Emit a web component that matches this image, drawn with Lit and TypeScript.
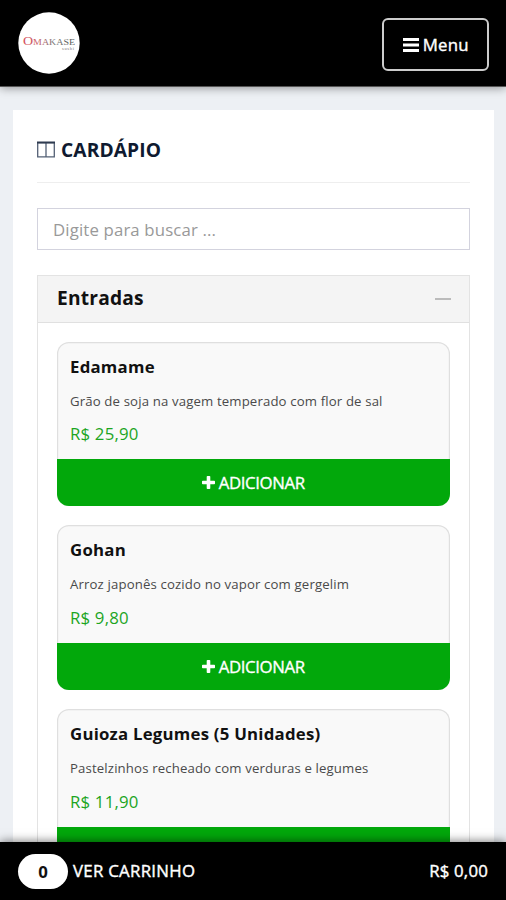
import { LitElement, html, css } from "lit";
import { customElement, property } from "lit/decorators.js";

interface Dish {
  name: string;
  description: string;
  price: string;
}

const DISHES: Dish[] = [
  { name: "Edamame", description: "Grão de soja na vagem temperado com flor de sal", price: "R$ 25,90" },
  { name: "Gohan", description: "Arroz japonês cozido no vapor com gergelim", price: "R$ 9,80" },
  { name: "Guioza Legumes (5 Unidades)", description: "Pastelzinhos recheado com verduras e legumes", price: "R$ 11,90" },
];

@customElement("dish-card")
export class DishCard extends LitElement {
  @property({ attribute: false }) dish!: Dish;

  static styles = css`
    :host { display: block; height: 164.6px; }
    .card {
      box-sizing: border-box; height: 100%; display: flex; flex-direction: column;
      border-radius: 12px; overflow: hidden; background: #f9f9f9;
      box-shadow: inset 0 0 0 1.2px #dfdfdf;
    }
    .info { flex: none; height: 117.7px; box-sizing: border-box; padding: 13px 13.5px 0; }
    .name { font-size: 16.8px; font-weight: 700; line-height: 24px; letter-spacing: 0.23px; color: #111; white-space: nowrap; }
    .description { margin-top: 12px; font-size: 13.2px; line-height: 20px; letter-spacing: 0.14px; color: #4a4a4a; white-space: nowrap; }
    .price { margin-top: 11.8px; font-size: 16.8px; line-height: 24px; letter-spacing: 0.18px; color: #1da51f; white-space: nowrap; }
    .add {
      flex: 1; display: flex; align-items: center; justify-content: center; gap: 4px;
      border: 0; padding: 0; background: #02a80b; color: #fff;
      font: 400 16.8px/24px "Open Sans", sans-serif; letter-spacing: -0.4px;
      -webkit-text-stroke: 0.35px #fff;
    }
    .plus { width: 13px; height: 13px; margin-top: -1px; }
  `;

  render() {
    return html`
      <div class="card">
        <div class="info">
          <div class="name">${this.dish.name}</div>
          <div class="description">${this.dish.description}</div>
          <div class="price">${this.dish.price}</div>
        </div>
        <button class="add">
          <svg class="plus" viewBox="0 0 13 13"><path d="M4.7 .8Q4.7 0 5.5 0H7.5Q8.3 0 8.3 .8V4.7H12.2Q13 4.7 13 5.5V7.5Q13 8.3 12.2 8.3H8.3V12.2Q8.3 13 7.5 13H5.5Q4.7 13 4.7 12.2V8.3H.8Q0 8.3 0 7.5V5.5Q0 4.7 .8 4.7H4.7Z" fill="#fff"/></svg>
          <span>ADICIONAR</span>
        </button>
      </div>`;
  }
}

@customElement("app-root")
export class AppRoot extends LitElement {
  static styles = css`
    :host {
      display: flex; flex-direction: column; width: 100%; height: 900px; overflow: hidden;
      background: #edf0f4; font-family: "Open Sans", sans-serif;
    }
    .top {
      flex: none; height: 87px; box-sizing: border-box; padding: 0 17px 0 18px;
      display: flex; align-items: center; justify-content: space-between;
      background: #000; border-bottom: 1px solid #555; box-shadow: 0 1px 9px rgba(0, 0, 0, 0.4); z-index: 1;
    }
    .logo { width: 62px; height: 62px; display: block; }
    .menu {
      box-sizing: border-box; width: 107.5px; height: 53px; margin-top: 3px; padding: 0;
      display: flex; align-items: center; justify-content: center; gap: 4px;
      background: #000; border: 2px solid #ccc; border-radius: 6px; color: #fff;
      font: 400 16.8px/24px "Open Sans", sans-serif; letter-spacing: 0.2px;
      -webkit-text-stroke: 0.4px #fff;
    }
    .bars { width: 16px; height: 14px; margin-left: 1px; }
    .content { flex: 1; min-height: 0; overflow: hidden; padding: 23px 12px 0 13px; }
    .panel { background: #fff; padding: 24px 24.5px 0 24px; height: 100%; box-sizing: border-box; }
    .title {
      display: flex; align-items: center; gap: 6px; height: 31px; padding-bottom: 17px;
      border-bottom: 1px solid #eee;
      font-size: 19.2px; font-weight: 700; letter-spacing: 0.1px; color: #0f1a30;
    }
    .columns { width: 18px; height: 17px; }
    .search {
      display: block; box-sizing: border-box; width: 100%; height: 42px; margin: 25px 0;
      padding: 0 15px; border: 1.5px solid #d3d3de; border-radius: 0; background: #fff;
      font: 400 16.8px "Open Sans", sans-serif; letter-spacing: 0.14px; color: #555;
    }
    .search::placeholder { color: #999; opacity: 1; }
    .group { border: 1.5px solid #e3e3e3; box-sizing: border-box; }
    .group-head {
      display: flex; align-items: center; justify-content: space-between;
      height: 46px; padding: 0 18px 0 19px; background: #f4f4f4; border-bottom: 1px solid #e0e0e0;
      font-size: 19.2px; font-weight: 700; letter-spacing: 0.2px; color: #111;
    }
    .group-name { margin-top: -4px; }
    .collapse { width: 16px; height: 2px; background: #bbb; }
    .dishes { display: flex; flex-direction: column; gap: 19.3px; padding: 18.6px 18.5px; }
    .cart {
      flex: none; height: 58px; box-sizing: border-box; padding: 0 18px;
      display: flex; align-items: center; background: #000; color: #fff;
      box-shadow: 0 -1px 9px rgba(0, 0, 0, 0.5); z-index: 1;
      font-size: 16.8px;
    }
    .count {
      width: 50px; height: 35px; border-radius: 18px; background: #fff; color: #111;
      display: flex; align-items: center; justify-content: center; font-weight: 700;
    }
    .cart-label { margin: -2px 0 0 5px; letter-spacing: 0.3px; -webkit-text-stroke: 0.4px #fff; }
    .total { margin: -2px 0 0 auto; letter-spacing: 0.2px; -webkit-text-stroke: 0.4px #fff; }
  `;

  render() {
    return html`
      <header class="top">
        <svg class="logo" viewBox="0 0 62 62">
          <defs>
            <linearGradient id="ink" gradientUnits="userSpaceOnUse" x1="5" x2="57" y1="0" y2="0"><stop offset="0" stop-color="#d64b59"/><stop offset=".3" stop-color="#c5606a"/><stop offset=".6" stop-color="#777"/><stop offset="1" stop-color="#555"/></linearGradient>
          </defs>
          <circle cx="31" cy="31" r="30.7" fill="#fff"/>
          <text x="5" y="33" font-family="Liberation Serif, serif" font-size="12" textLength="52" lengthAdjust="spacingAndGlyphs" fill="url(#ink)">O<tspan font-size="8.5">MAKASE</tspan></text>
          <text x="44" y="37.5" font-family="Liberation Serif, serif" font-size="4.5" textLength="12" fill="#777">sushi</text>
        </svg>
        <button class="menu">
          <svg class="bars" viewBox="0 0 16 14"><path d="M0 1.5H16M0 7H16M0 12.5H16" stroke="#fff" stroke-width="2.8"/></svg>
          <span>Menu</span>
        </button>
      </header>
      <main class="content">
        <section class="panel">
          <div class="title">
            <svg class="columns" viewBox="0 0 18 17"><path d="M.7 1.6H17.3V15.8H.7ZM9 2V15.5" fill="none" stroke="#536075" stroke-width="1.3"/><path d="M0 1.5H18" stroke="#2e3b50" stroke-width="2"/></svg>
            <span>CARDÁPIO</span>
          </div>
          <input class="search" type="text" placeholder="Digite para buscar ..." />
          <div class="group">
            <div class="group-head"><span class="group-name">Entradas</span><span class="collapse"></span></div>
            <div class="dishes">${DISHES.map((d) => html`<dish-card .dish=${d}></dish-card>`)}</div>
          </div>
        </section>
      </main>
      <footer class="cart">
        <span class="count">0</span>
        <span class="cart-label">VER CARRINHO</span>
        <span class="total">R$ 0,00</span>
      </footer>`;
  }
}
